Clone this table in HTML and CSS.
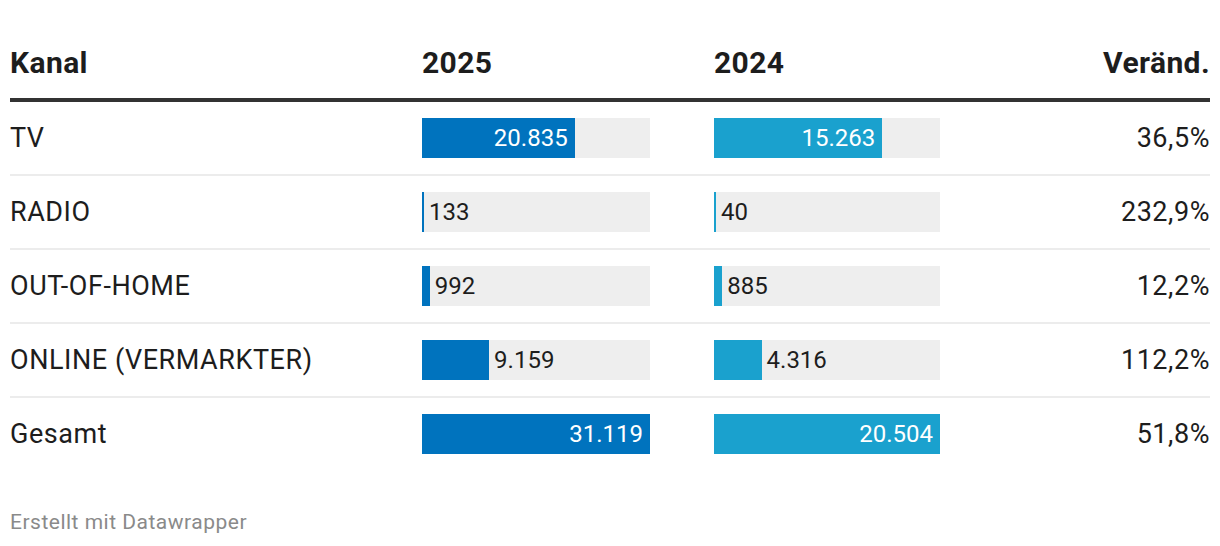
FILE: index.html
```html
<!DOCTYPE html>
<html lang="de">
<head>
<meta charset="utf-8">
<title>Kanal 2025 2024</title>
<link rel="stylesheet" href="styles.css">
</head>
<body>
<div class="chart">
  <div class="row head">
    <div class="c-label">Kanal</div>
    <div class="c-a">2025</div>
    <div class="c-b">2024</div>
    <div class="c-chg">Veränd.</div>
  </div>

  <div class="row">
    <div class="c-label">TV</div>
    <div class="c-a"><div class="bar"><div class="fill a inside" style="width:66.95%">20.835</div></div></div>
    <div class="c-b"><div class="bar"><div class="fill b inside" style="width:74.44%">15.263</div></div></div>
    <div class="c-chg">36,5%</div>
  </div>

  <div class="row">
    <div class="c-label">RADIO</div>
    <div class="c-a"><div class="bar"><div class="fill a" style="width:0.43%"></div><span class="out">133</span></div></div>
    <div class="c-b"><div class="bar"><div class="fill b" style="width:0.2%"></div><span class="out">40</span></div></div>
    <div class="c-chg">232,9%</div>
  </div>

  <div class="row">
    <div class="c-label">OUT-OF-HOME</div>
    <div class="c-a"><div class="bar"><div class="fill a" style="width:3.4%"></div><span class="out">992</span></div></div>
    <div class="c-b"><div class="bar"><div class="fill b" style="width:3.7%"></div><span class="out">885</span></div></div>
    <div class="c-chg">12,2%</div>
  </div>

  <div class="row">
    <div class="c-label">ONLINE (VERMARKTER)</div>
    <div class="c-a"><div class="bar"><div class="fill a" style="width:29.43%"></div><span class="out">9.159</span></div></div>
    <div class="c-b"><div class="bar"><div class="fill b" style="width:21.05%"></div><span class="out">4.316</span></div></div>
    <div class="c-chg">112,2%</div>
  </div>

  <div class="row last">
    <div class="c-label">Gesamt</div>
    <div class="c-a"><div class="bar"><div class="fill a inside" style="width:100%">31.119</div></div></div>
    <div class="c-b"><div class="bar"><div class="fill b inside" style="width:100%">20.504</div></div></div>
    <div class="c-chg">51,8%</div>
  </div>

  <div class="footer">Erstellt mit Datawrapper</div>
</div>
</body>
</html>
```

FILE: styles.css
```css
html, body {
  margin: 0;
  padding: 0;
  background: #ffffff;
}

body {
  font-family: Roboto, "Liberation Sans", Arial, sans-serif;
  color: #1d1d1d;
}

.chart {
  width: 1200px;
  padding: 0 10px;
}

.row {
  display: grid;
  grid-template-columns: 412px 292px 226px 1fr;
  align-items: center;
  height: 72px;
  border-bottom: 2px solid #ececec;
  font-size: 24px;
}

.row.last {
  border-bottom: none;
}

.c-label,
.c-chg {
  font-size: 27px;
  letter-spacing: 0.55px;
}

.row.head {
  height: auto;
  padding-top: 46px;
  padding-bottom: 18px;
  line-height: 34px;
  border-bottom: 4px solid #333333;
}

.row.head > div {
  font-size: 30px;
  font-weight: 700;
  letter-spacing: 0.4px;
}

.c-a .bar {
  width: 228px;
}

.c-b .bar {
  width: 226px;
}

.c-chg {
  text-align: right;
}

.bar {
  display: flex;
  align-items: center;
  height: 40px;
  background: #eeeeee;
}

.fill {
  height: 100%;
  min-width: 2px;
  display: flex;
  align-items: center;
  justify-content: flex-end;
  color: #ffffff;
  box-sizing: border-box;
}

.fill.inside {
  padding-right: 7px;
}

.fill.a {
  background: #0073be;
}

.fill.b {
  background: #1aa1ce;
}

.out {
  margin-left: 5px;
  color: #1d1d1d;
}

.footer {
  margin-top: 40px;
  font-size: 21px;
  line-height: 25px;
  letter-spacing: 0.5px;
  color: #8a8a8a;
}
```
